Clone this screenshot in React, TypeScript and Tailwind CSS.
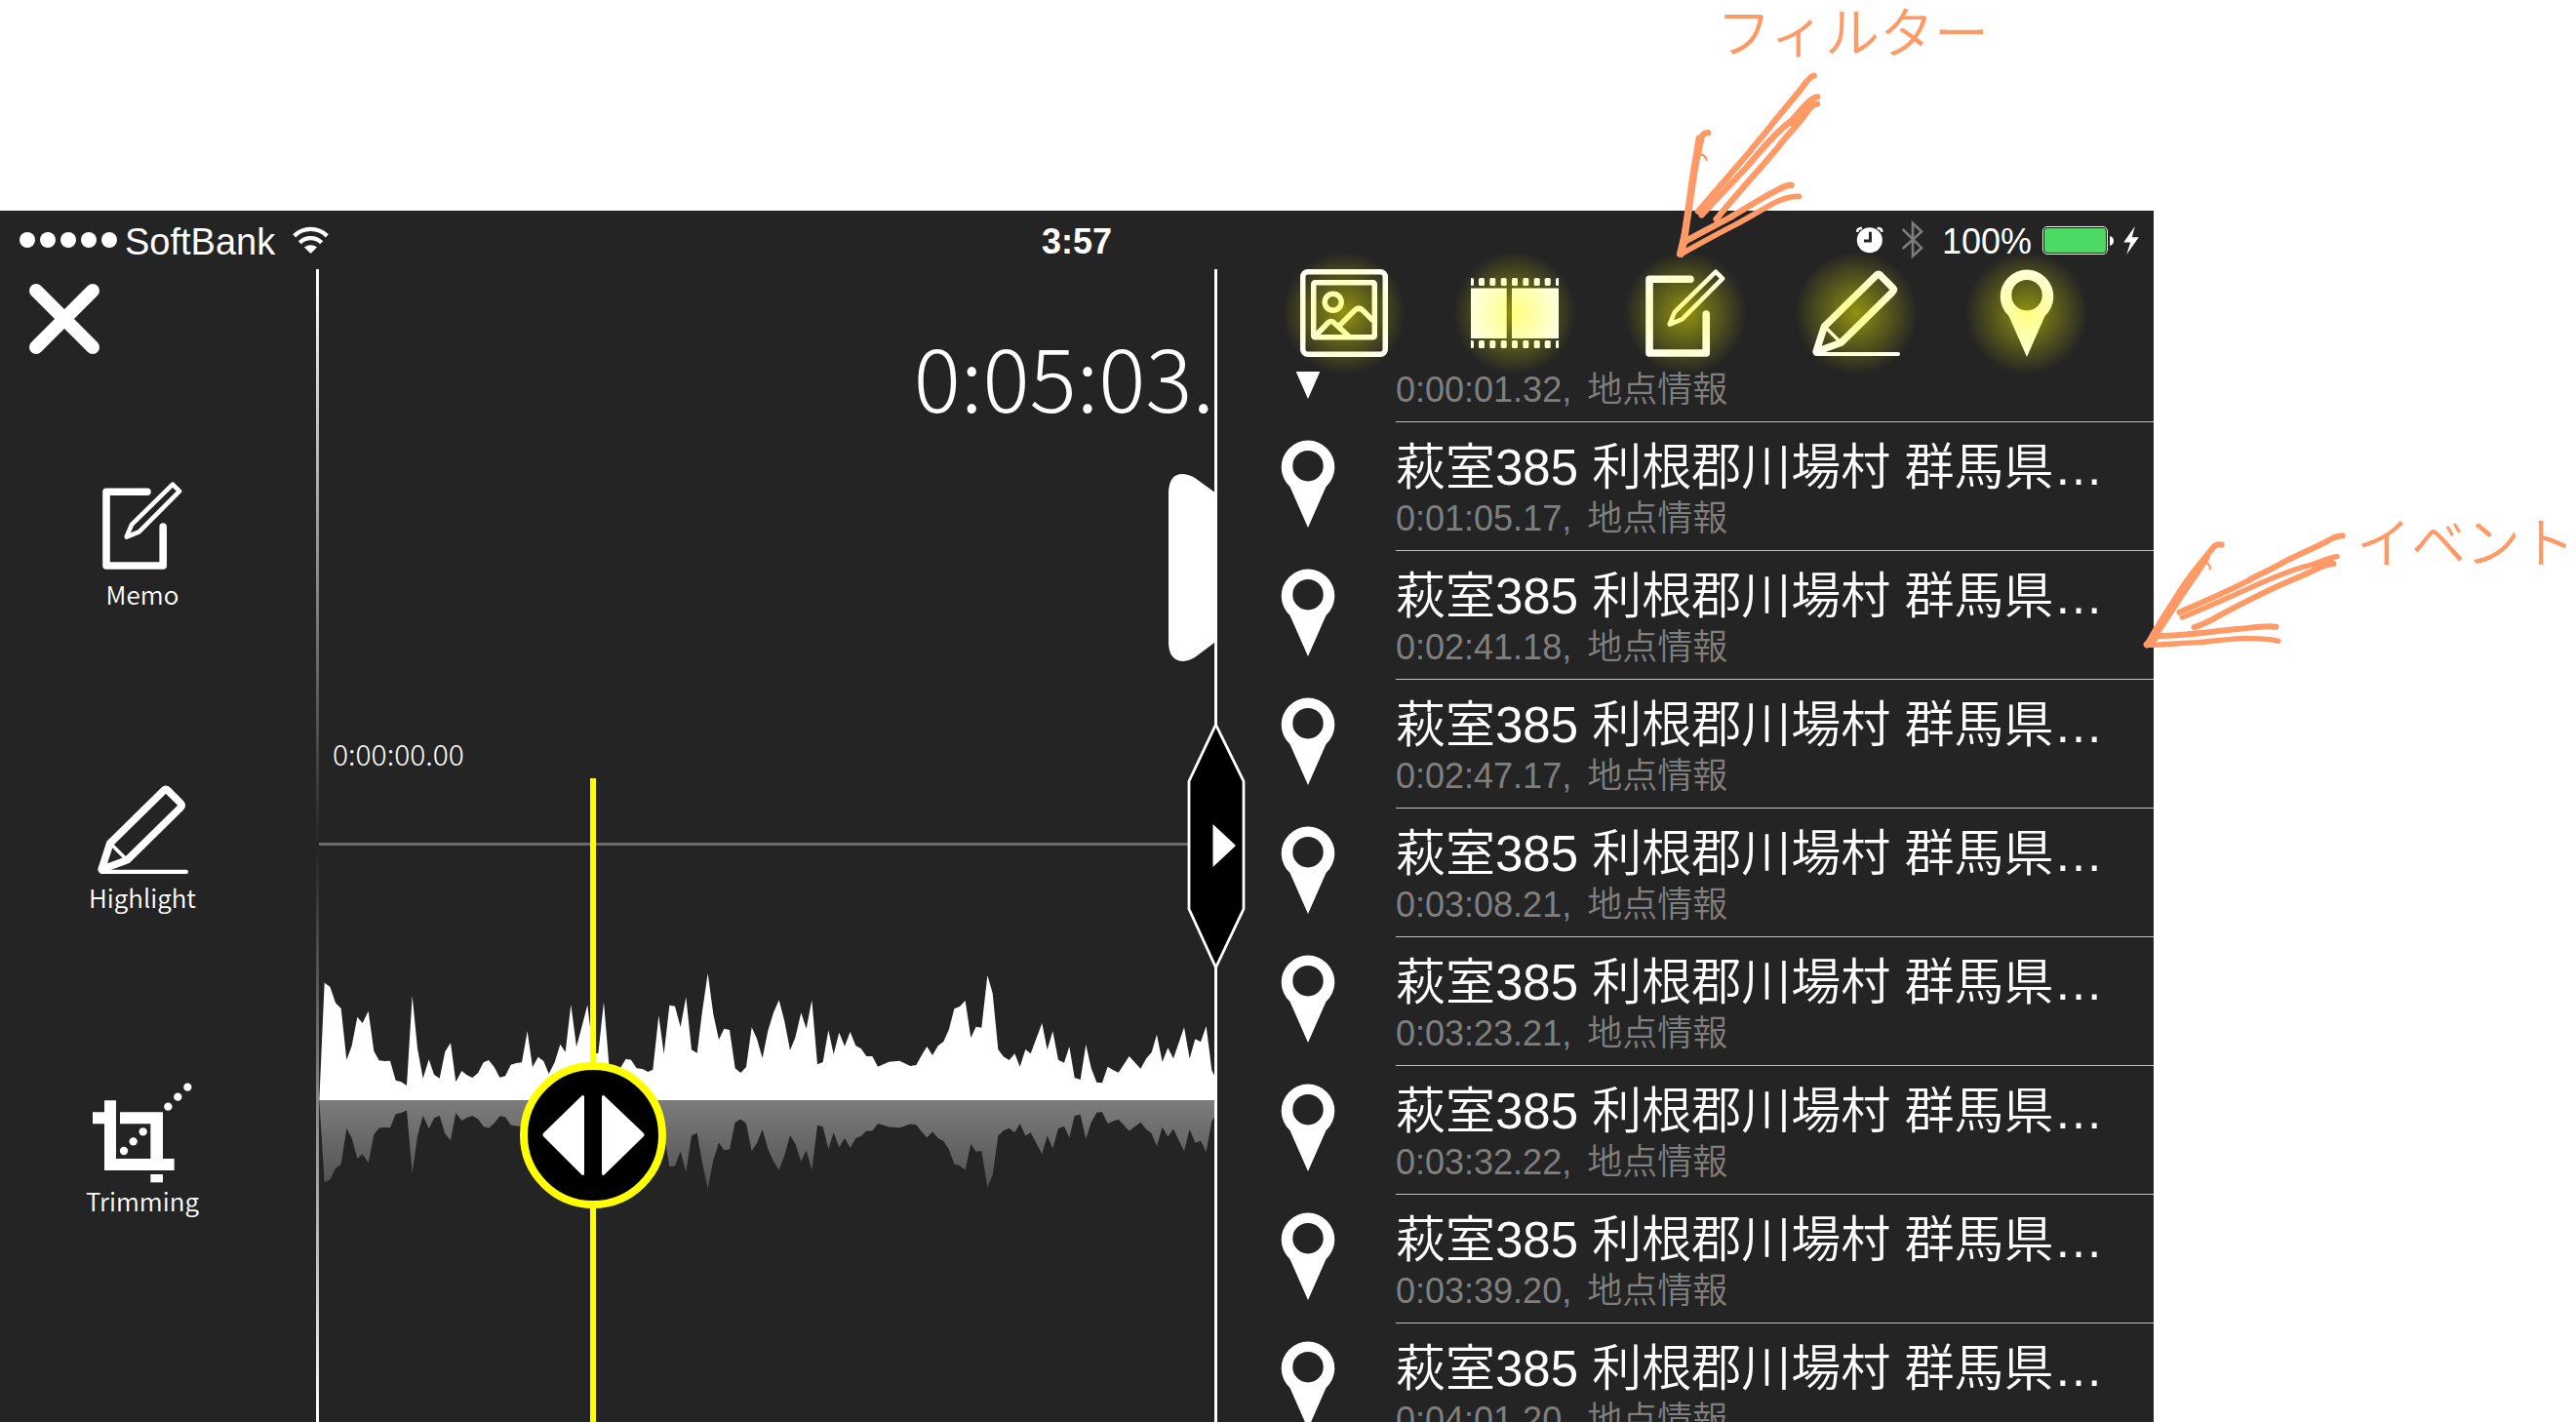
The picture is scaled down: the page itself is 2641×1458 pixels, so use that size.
import type { ReactNode } from "react";

const ICON = "block h-[90px] w-[90px]";

function ImageIcon() {
  return (
    <svg viewBox="0 0 90 90" className={ICON} fill="none" stroke="white" strokeWidth="5.5" strokeLinejoin="round">
      <rect x="2.75" y="2.75" width="84.5" height="84.5" rx="5" />
      <rect x="13.75" y="13.75" width="62.5" height="56" rx="1.5" />
      <circle cx="33.7" cy="33.7" r="8.5" />
      <path d="M16 68 L27.500 56 Q31.500 51 36 56 L50 69" />
      <path d="M40 58 L55.500 42.500 Q60 38 64.500 42.500 L75 53" />
    </svg>
  );
}

const HOLES = [8, 19.3, 30.7, 42, 53.3, 64.7, 75.7];

function FilmIcon() {
  return (
    <svg viewBox="0 0 90 90" className={ICON} fill="white">
      <path d="M0 19.500H36.700V71H0ZM42 19.500H90V71H42Z" />
      {[9, 73].map((y) => (
        <g key={y}>
          <path d={`M0 ${y}h1.500q1.500 0 1.500 1.500v5q0 1.500 -1.500 1.500h-1.500z`} />
          {HOLES.map((x) => (
            <rect key={x} x={x} y={y} width="6" height="8" rx="1.500" />
          ))}
          <path d={`M90 ${y}h-1.500q-1.500 0 -1.500 1.500v5q0 1.500 1.500 1.500h1.500z`} />
        </g>
      ))}
    </svg>
  );
}

function MemoIcon() {
  return (
    <svg viewBox="0 0 90 90" className={ICON} fill="none" stroke="white" strokeLinecap="round" strokeLinejoin="round">
      <path d="M50 10.300H8V86H66.200V46" strokeWidth="7.600" />
      <path d="M76 2.700L83 9.700L41.500 51.300L28.700 56.500L34 43.800Z" strokeWidth="4.600" />
    </svg>
  );
}

function HighlightIcon({ className = ICON }: { className?: string }) {
  return (
    <svg viewBox="0 0 90 90" className={className} fill="none" stroke="white" strokeLinecap="round" strokeLinejoin="round">
      <path d="M65.500 6.500Q67.700 4.300 70 6.500L82.300 18.800Q84.500 21 82.300 23.300L29.500 75.300L4 84.700L12.300 58.800Z" strokeWidth="7.300" />
      <path d="M13 59L30 76" strokeWidth="3.400" />
      <path d="M4 87H88" strokeWidth="4" />
    </svg>
  );
}

function PinIcon() {
  return (
    <svg viewBox="0 0 90 90" className={ICON} fill="white" fillRule="evenodd">
      <path d="M45 90L26.500 48A27.300 27.300 0 1 1 63.500 48ZM45 11A15.700 15.700 0 1 0 45 42.400A15.700 15.700 0 1 0 45 11Z" />
    </svg>
  );
}

const TRIM_DOTS = [
  [403, 102],
  [373, 132],
  [343, 162],
  [266, 239],
  [236, 269],
  [207, 298],
];

function TrimIcon() {
  return (
    <svg viewBox="111 88 306 309" className="block h-[103px] w-[102px]" fill="white">
      <path d="M147 143H183V322H289V215H195V179H327V322H362V358H147V215H111V179H147Z" />
      <rect x="289" y="370" width="38" height="25" />
      {TRIM_DOTS.map(([x, y]) => (
        <circle key={x} cx={x} cy={y} r="12.500" />
      ))}
    </svg>
  );
}

function StatusBar() {
  return (
    <header className="grid h-[60px] grid-cols-[1fr_auto_1fr] items-center text-[36px] leading-[40px]">
      <div className="flex items-center pl-5">
        <div className="flex gap-[5px]" role="img" aria-label="Signal strength">
          {[0, 1, 2, 3, 4].map((i) => (
            <span key={i} className="size-4 rounded-full bg-white" />
          ))}
        </div>
        <span className="ml-2 pt-1 text-[38px]">SoftBank</span>
        <svg viewBox="900 92 112 88" className="ml-[18px] h-[29px] w-[37px]" fill="none" stroke="white" strokeWidth="13">
          <path d="M905 122A72 72 0 0 1 1007 122" />
          <path d="M922 143A48 48 0 0 1 990 143" />
          <path d="M956 177L936 157Q956 144 976 157Z" fill="white" stroke="none" />
        </svg>
      </div>
      <span className="pt-1 font-bold">3:57</span>
      <div className="flex items-center justify-end pr-[15px]">
        <svg viewBox="252 66 85 86" className="h-7 w-7" fill="none">
          <circle cx="294" cy="110" r="40" fill="white" />
          <path d="M296 84V112H276" stroke="#242424" strokeWidth="9" />
          <path d="M256 84Q254 72 270 72" stroke="white" strokeWidth="8" />
          <path d="M332 84Q334 72 318 72" stroke="white" strokeWidth="8" />
        </svg>
        <svg viewBox="388 46 74 128" className="ml-[18px] h-[42px] w-6" fill="none" stroke="#7c7c7c" strokeWidth="8">
          <path d="M393 76L453 135L425 161V57L453 84L393 138" />
        </svg>
        <span className="ml-[18px] pt-1">100%</span>
        <svg viewBox="0 0 74 29" className="ml-[11px] h-[29px] w-[74px]">
          <rect x=".5" y=".5" width="66" height="28" rx="4.500" fill="#101010" stroke="white" />
          <rect x="2" y="2" width="63" height="25" rx="3" fill="#4cd964" />
          <path d="M69 10Q73 11 73 15T69 20Z" fill="white" />
        </svg>
        <svg viewBox="1072 64 47 88" className="ml-[9px] h-[29px] w-4" fill="white">
          <path d="M1107 64L1072 114H1093L1081 152L1119 98H1098Z" />
        </svg>
      </div>
    </header>
  );
}

function Tool({ label, children }: { label: string; children: ReactNode }) {
  return (
    <button type="button" className="flex flex-col items-center">
      <span className="flex h-[104px] items-center">{children}</span>
      <span className="font-['Noto_Sans_CJK_JP',sans-serif] text-[26px] leading-[36px] font-[350]">{label}</span>
    </button>
  );
}

function Sidebar() {
  return (
    <nav className="flex w-[324px] shrink-0 flex-col items-start">
      <button type="button" aria-label="Close" className="mt-[15px] ml-[30px]">
        <svg viewBox="0 0 72 72" className="block size-[72px]" stroke="white" strokeWidth="14" strokeLinecap="round">
          <path d="M7 7L65 65M65 7L7 65" />
        </svg>
      </button>
      <div className="mt-[124px] flex w-full flex-col items-center gap-[171px] pr-8">
        <Tool label="Memo">
          <MemoIcon />
        </Tool>
        <Tool label="Highlight">
          <HighlightIcon className="block size-[93px]" />
        </Tool>
        <Tool label="Trimming">
          <TrimIcon />
        </Tool>
      </div>
    </nav>
  );
}

/* Waveform samples as x, y pairs; the base line is at y = 504. */
const BASE = 504;
const WAVE: [number, number][] = [
  [22, 504], [38, 143], [55, 155], [72, 205], [89, 222], [106, 380], [122, 337], [139, 248], [155, 267], [173, 230],
  [190, 353], [206, 382], [223, 384], [240, 383], [257, 443], [274, 448], [291, 459], [308, 183], [324, 345], [341, 437],
  [359, 379], [375, 425], [392, 437], [409, 355], [426, 328], [442, 448], [460, 414], [476, 427], [493, 435], [510, 421],
  [527, 388], [543, 381], [560, 402], [577, 434], [594, 430], [611, 395], [628, 390], [645, 388], [662, 292], [678, 403],
  [695, 371], [712, 384], [728, 423], [746, 388], [763, 332], [779, 356], [796, 210], [813, 340], [830, 276], [847, 211],
  [864, 358], [880, 361], [897, 202], [914, 405], [931, 415], [948, 405], [965, 377], [981, 380], [998, 406], [1016, 408],
  [1033, 417], [1048, 410], [1066, 244], [1082, 362], [1099, 212], [1116, 215], [1133, 279], [1150, 187], [1167, 349], [1184, 359],
  [1200, 230], [1217, 114], [1234, 240], [1251, 318], [1267, 284], [1284, 288], [1301, 406], [1318, 420], [1335, 402], [1352, 280],
  [1368, 315], [1385, 375], [1402, 290], [1419, 235], [1436, 196], [1453, 262], [1470, 350], [1486, 312], [1504, 235], [1520, 284],
  [1537, 196], [1554, 394], [1571, 387], [1588, 289], [1604, 363], [1621, 296], [1638, 338], [1655, 294], [1672, 337], [1688, 345],
  [1705, 369], [1723, 369], [1740, 401], [1774, 386], [1807, 383], [1840, 399], [1858, 396], [1875, 365], [1891, 339], [1908, 366],
  [1925, 337], [1942, 324], [1959, 286], [1975, 223], [1992, 216], [2009, 198], [2026, 312], [2042, 278], [2059, 281], [2077, 120],
  [2093, 175], [2110, 348], [2126, 370], [2144, 381], [2161, 361], [2177, 401], [2194, 348], [2210, 361], [2245, 267], [2261, 349],
  [2278, 292], [2295, 380], [2313, 389], [2329, 339], [2345, 435], [2363, 441], [2380, 333], [2396, 405], [2413, 449], [2430, 451],
  [2447, 401], [2464, 412], [2480, 419], [2513, 369], [2548, 407], [2566, 375], [2582, 357], [2598, 302], [2615, 386], [2632, 343],
  [2649, 376], [2682, 280], [2699, 376], [2716, 316], [2733, 325], [2750, 276], [2767, 412], [2775, 428], [2775, 504],
];
const upper = WAVE.map(([x, y]) => `${x},${y}`).join(" ");
const lower = WAVE.map(([x, y]) => `${x},${BASE + (BASE - y) * 0.7}`).join(" ");

function Waveform() {
  return (
    <svg viewBox="21 0 2754 780" preserveAspectRatio="none" className="block h-[260px] w-full" role="img" aria-label="Waveform">
      <defs>
        <linearGradient id="mirror" gradientUnits="userSpaceOnUse" x1="0" y1="504" x2="0" y2="780">
          <stop offset="0" stopColor="#7c7c7c" />
          <stop offset="1" stopColor="#505050" />
        </linearGradient>
      </defs>
      <polygon points={lower} fill="url(#mirror)" />
      <polygon points={upper} fill="white" />
    </svg>
  );
}

function Timeline() {
  return (
    <section className="relative flex min-w-0 flex-1 flex-col">
      <div className="flex h-[210px] justify-end pt-12 font-['Noto_Sans_CJK_JP',sans-serif] text-[90px] leading-[120px] font-light">
        <span>0:05:03.</span>
      </div>
      <button type="button" aria-label="Next clip" className="self-end">
        <svg viewBox="0 0 47 192" className="block h-[192px] w-[47px]" fill="white">
          <path d="M0 18Q1 0 14 0Q20 0 27 4L47 18.500V173L27 188Q20 192 14 192Q1 191 0 174Z" />
        </svg>
      </button>
      <p className="mt-[74px] ml-[14px] font-['Noto_Sans_CJK_JP',sans-serif] text-[30px] leading-[40px] font-light">0:00:00.00</p>
      <hr className="mt-[72px] border-t-[3px] border-[#6b6b6b]" />
      <div className="mt-[93px]">
        <Waveform />
      </div>
      <div className="absolute top-[522px] bottom-0 left-[278px] w-[6px] bg-[#ffff00]" />
      <button type="button" aria-label="Playhead" className="absolute top-[813px] left-[206px] size-[150px] rounded-full border-8 border-[#ffff00] bg-black">
        <svg viewBox="0 0 134 134" className="block size-full" fill="white" stroke="white" strokeWidth="3" strokeLinejoin="round">
          <path d="M56.500 27.500V106.500L17.500 67.500Q16.500 66.500 17.500 65.500Z" />
          <path d="M77.500 27.500V106.500L117.500 67.500Q118.500 66.500 117.500 65.500Z" />
        </svg>
      </button>
    </section>
  );
}

const FILTERS = [
  { name: "Photos", icon: <ImageIcon /> },
  { name: "Video", icon: <FilmIcon /> },
  { name: "Memo", icon: <MemoIcon /> },
  { name: "Highlight", icon: <HighlightIcon /> },
  { name: "Location", icon: <PinIcon /> },
];

const TIMES = [
  "0:00:01.32",
  "0:01:05.17",
  "0:02:41.18",
  "0:02:47.17",
  "0:03:08.21",
  "0:03:23.21",
  "0:03:32.22",
  "0:03:39.20",
  "0:04:01.20",
];

function Events() {
  return (
    <section className="flex w-[960px] shrink-0 flex-col">
      <div className="relative z-10 grid h-[105px] shrink-0 grid-cols-5 justify-items-center px-[42px]">
        {FILTERS.map((f) => (
          <button key={f.name} type="button" aria-label={f.name} aria-pressed="true" className="relative h-[90px]">
            {f.icon}
            <span className="pointer-events-none absolute -inset-[18px] bg-[radial-gradient(circle_closest-side,rgba(255,255,0,0.5),rgba(255,255,0,0))]" />
          </button>
        ))}
      </div>
      <div className="min-h-0 flex-1 overflow-hidden">
        <ul className="-mt-20">
          {TIMES.map((time) => (
            <li key={time} className="flex h-[132px]">
              <span className="flex w-[183px] shrink-0 justify-center pt-[18px] pl-[3px]">
                <PinIcon />
              </span>
              <div className="min-w-0 flex-1 border-b border-[#c0c0c0] pt-[17px] font-[350]">
                <p className="text-[51px] leading-[60px] whitespace-nowrap">萩室385 利根郡川場村 群馬県…</p>
                <p className="flex gap-4 text-[36px] leading-[44px] text-[#7f7f7f]">
                  <span>{time},</span>
                  <span>地点情報</span>
                </p>
              </div>
            </li>
          ))}
        </ul>
      </div>
    </section>
  );
}

function FilterArrow() {
  return (
    <svg
      viewBox="230 210 460 590"
      className="absolute top-[70px] right-[771px] z-20 h-[197px] w-[153px]"
      fill="none"
      stroke="#ff9966"
      strokeWidth="19"
      strokeLinecap="round"
      strokeLinejoin="round"
    >
      <path d="M659 232Q648 232 620 272C590 310 550 355 520 394S480 440 462 465L302 650" />
      <path d="M670 297Q655 298 630 325L590 370C530 415 490 470 450 515L313 661" />
      <path d="M669 319Q655 318 640 340C610 385 580 410 550 450S460 550 358 674" />
      <path d="M645 322L590 378" />
      <path d="M333 408Q318 406 312 425C305 460 295 500 290 535S275 650 248 780" />
      <path d="M306 425C296 490 287 530 280 590L258 745" strokeWidth="22" />
      <path d="M310 476Q322 474 328 491" strokeWidth="7" />
      <path d="M590 569C570 568 555 580 520 598C480 620 430 652 400 669S320 710 258 745" />
      <path d="M613 604C590 602 560 613 540 622C490 648 450 675 415 692C350 725 310 748 248 782" strokeWidth="17" />
      <path d="M258 740L248 780" strokeWidth="24" />
    </svg>
  );
}

function EventArrow() {
  return (
    <svg
      viewBox="105 130 640 370"
      className="absolute top-[543px] right-[232px] z-20 h-[123px] w-[214px]"
      fill="none"
      stroke="#ff9966"
      strokeWidth="18"
      strokeLinecap="round"
      strokeLinejoin="round"
    >
      <path d="M725 149Q705 148 670 170C620 195 570 215 530 238S450 275 430 290C360 325 290 355 222 385" />
      <path d="M708 213C690 212 660 230 620 241C560 256 500 282 430 314S300 372 230 401" strokeWidth="16" />
      <path d="M697 235C670 234 640 256 600 272C500 312 430 350 350 392C320 410 300 422 267 431" />
      <path d="M690 228L640 244" />
      <path d="M352 177Q335 172 322 190C300 218 250 275 220 325S165 405 122 486" />
      <path d="M305 215C285 250 255 290 230 328L150 450" strokeWidth="22" />
      <path d="M303 232Q317 236 316 251" strokeWidth="7" />
      <path d="M520 430C490 425 450 432 400 437C320 444 240 458 150 458" />
      <path d="M527 474C500 466 460 465 420 466C360 468 320 475 280 478C220 480 180 486 122 486" strokeWidth="16" />
      <path d="M148 462L122 484" strokeWidth="22" />
    </svg>
  );
}

export default function App() {
  return (
    <div className="relative flex h-screen flex-col overflow-hidden bg-white font-['Liberation_Sans','Noto_Sans_CJK_JP',sans-serif]">
      <div className="flex h-[216px] shrink-0 justify-end pr-[602px] font-['Noto_Sans_CJK_JP',sans-serif] text-[56px] leading-[60px] font-[350] text-[#ff9966]">
        <p>フィルター</p>
      </div>
      <div className="flex min-h-0 flex-1">
        <main className="flex min-w-0 flex-1 flex-col bg-[#242424] text-white">
          <StatusBar />
          <div className="flex min-h-0 flex-1">
            <Sidebar />
            <div className="w-[3px] shrink-0 bg-[linear-gradient(#fff,#242424_50%,#fff)]" />
            <Timeline />
            <div className="relative z-10 w-[3px] shrink-0 bg-white">
              <button type="button" aria-label="Collapse list" className="absolute top-[464px] -left-7">
                <svg viewBox="0 0 60 256" className="block h-[256px] w-[60px]">
                  <path d="M29.500 3L58 61V192L29.500 252L2 192V61Z" fill="black" stroke="white" strokeWidth="2.800" />
                  <path d="M26.500 105V149L49 128Q50.500 127 49 126Z" fill="white" />
                </svg>
              </button>
            </div>
            <Events />
          </div>
        </main>
        <aside className="w-[433px] shrink-0 pt-[307px] pl-[208px] font-['Noto_Sans_CJK_JP',sans-serif] text-[56px] leading-[60px] font-[350] text-[#ff9966]">
          <p className="whitespace-nowrap">イベント</p>
        </aside>
      </div>
      <FilterArrow />
      <EventArrow />
    </div>
  );
}
